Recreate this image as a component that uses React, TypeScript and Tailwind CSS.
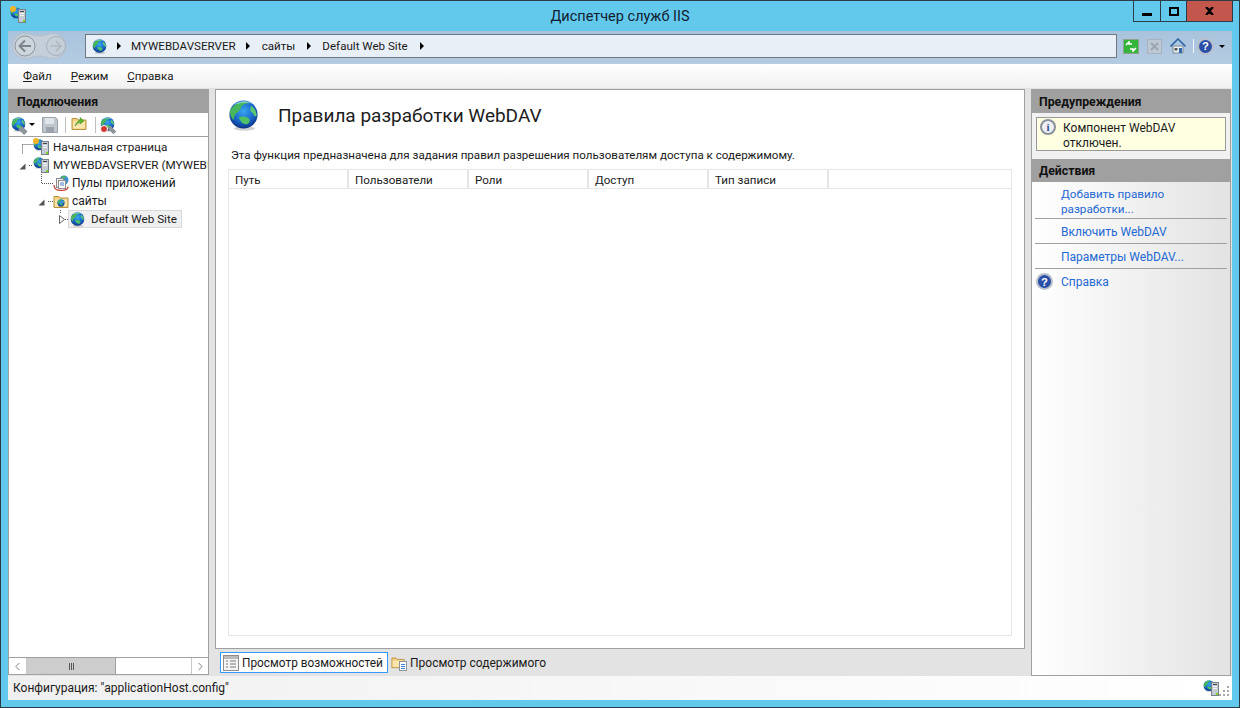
import { useId } from 'react'
import { ChevronLeft, ChevronRight } from 'lucide-react'
import type { ReactNode } from 'react'

const font = "font-['Roboto',sans-serif]"

function Globe({ size = 16 }: { size?: number }) {
  const id = useId()
  return (
    <svg width={size} height={size} viewBox="0 0 32 32" className="shrink-0">
      <defs>
        <radialGradient id={id} cx="50%" cy="38%" r="65%">
          <stop offset="0%" stopColor="#39a6f0" />
          <stop offset="60%" stopColor="#1766c8" />
          <stop offset="100%" stopColor="#0b2a78" />
        </radialGradient>
      </defs>
      <ellipse cx="17" cy="29.5" rx="11" ry="2.2" fill="#000" opacity="0.18" />
      <circle cx="16" cy="15" r="14.5" fill={`url(#${id})`} />
      <path d="M7 5c4-3.5 10-4.5 15-2.5-2 1.500-5 1-7 3-2 1.500-1 3-3 5-1 2-3 2-4 4-1 2-2 3-2 6-2-1-4-5-4-9 0-2 3-4 5-6.500z" fill="#48b65c" />
      <path d="M11 18c3-1.500 8-1 11 1.500 1 2 0 3.500-1.500 5-2 1-4 .5-6-1-1.500-2-2.500-3.500-3.500-5.500z" fill="#4fc063" />
      <path d="M24 6c3 2 5.500 5.500 5.500 10-1 1.500-2.500 1-3-1-.5-2-3.500-2.500-3.500-5 0-1.500.5-3 1-4z" fill="#5cc874" />
      <path d="M6 5c3-3 7-4 10-4 5 0 8 2 9 3-4-1.500-12-1.500-19 1z" fill="#a5e0f5" opacity="0.55" />
    </svg>
  )
}

function ServerIcon({ badge = false }: { badge?: boolean }) {
  return (
    <span className="relative inline-block w-[16px] h-[16px] shrink-0">
      <span className="absolute left-0 top-0">
        <Globe size={12} />
      </span>
      {badge && <span className="absolute left-0 top-[-1px] w-[6px] h-[6px] rounded-full bg-[#f0b429]" />}
      <svg width="8" height="14" viewBox="0 0 8 14" className="absolute right-0 bottom-0">
        <rect x="0.5" y="0.5" width="7" height="13" fill="#c4cbd2" stroke="#77818b" />
        <rect x="2" y="2" width="4" height="1" fill="#444" />
        <rect x="2" y="4" width="4" height="1" fill="#f4f4f4" />
        <rect x="2" y="6" width="4" height="1" fill="#f4f4f4" />
        <rect x="5" y="11" width="2" height="2" fill="#7ed321" />
      </svg>
    </span>
  )
}

function FolderIcon({ size = 16, globe = false, arrow = false }: { size?: number; globe?: boolean; arrow?: boolean }) {
  return (
    <span className="relative inline-block shrink-0" style={{ width: size, height: size }}>
      <svg width={size} height={size} viewBox="0 0 16 16" className="block">
        <path d="M1 3.500h5l1 1.500h8v9.500H1z" fill="#f3d284" stroke="#b8913f" />
        <path d="M2 6.500h12v7H2z" fill="#fae6ad" />
        {arrow && <path d="M4 11c1-3 3-5 5-6V2.500l4 3.500-4 3V7C7 8 5.500 9.500 4 11z" fill="#5cb531" stroke="#3f8a1f" strokeWidth="0.5" />}
      </svg>
      {globe && (
        <span className="absolute left-[4px] top-[6px]">
          <Globe size={8} />
        </span>
      )}
    </span>
  )
}

function PoolIcon() {
  return (
    <svg width="16" height="16" viewBox="0 0 16 16" className="shrink-0">
      <circle cx="11" cy="5" r="4.500" fill="#3f8ed6" />
      <path d="M8 2c1-1.500 4-1.500 5 0-1 2-3 2-5 0z" fill="#4caf5f" />
      <rect x="3.500" y="3.500" width="7" height="9" fill="#f1f1f1" stroke="#8a8a8a" />
      <rect x="5.500" y="5.500" width="7" height="8" fill="#fff" stroke="#8a8a8a" />
      <path d="M7 8h4M7 10h4" stroke="#4a76c6" />
      <path d="M1 10c0 4 3 5.500 7 5.500s7-1.500 7-4" fill="none" stroke="#c9473d" strokeWidth="1.300" />
    </svg>
  )
}

function HelpIcon({ size = 16 }: { size?: number }) {
  return (
    <span
      className="inline-flex items-center justify-center rounded-full shrink-0 bg-[#2a4ea8] border-2 border-[#b9c0ca] text-white font-bold font-['Liberation_Sans',sans-serif]"
      style={{ width: size, height: size, fontSize: size * 0.66 }}
    >
      ?
    </span>
  )
}

function TreeLines({ width, kind }: { width: number; kind: string }) {
  return (
    <svg width={width} height="18" viewBox={`0 0 ${width} 18`} className="shrink-0">
      <g stroke="#555" strokeDasharray="1 1" fill="none">
        {kind === 'first' && <path d="M13.500 6.500V16M13.500 6.500H24" />}
        {kind === 'open' && <path d="M20 9.500H24" />}
        {kind === 'pool' && <path d="M32.500 0V9.500H44" />}
        {kind === 'sites' && <path d="M39 9.500H44" />}
        {kind === 'default' && <path d="M51.500 0V4M56 9.500H59" />}
      </g>
      {(kind === 'open' || kind === 'sites') && (
        <path d={kind === 'open' ? 'M10.500 13.500h6V7.500z' : 'M29.500 13.500h6V7.500z'} fill="#555" />
      )}
      {kind === 'default' && <path d="M50.500 5.500l5 4-5 4z" fill="#fff" stroke="#666" />}
    </svg>
  )
}

function Header({ children }: { children: ReactNode }) {
  return (
    <div className="h-[24px] bg-[#a0a0a0] flex items-center px-[7px] pt-[2px] text-[12.3px] font-bold text-[#111] shrink-0">
      {children}
    </div>
  )
}

function Sep() {
  return <div className="h-px mx-[3px] bg-[#a0a0a0]" />
}

function Crumb({ gap = 'ml-[12px]' }: { gap?: string }) {
  return <span className={`${gap} w-0 h-0 border-y-[4px] border-y-transparent border-l-[4px] border-l-black`} />
}

const columns = ['Путь', 'Пользователи', 'Роли', 'Доступ', 'Тип записи']

export default function App() {
  return (
    <div className={`${font} w-[1240px] h-[708px] overflow-hidden bg-[#62c9ec] border border-[#2b3c46] flex flex-col text-[12px] leading-[16px] text-[#1a1a1a]`}>
      {/* Title bar */}
      <div className="h-[30px] shrink-0 flex items-start">
        <div className="pl-[9px] pt-[6px] w-[200px]">
          <ServerIcon badge />
        </div>
        <div className="flex-1 text-center pt-[6px] text-[14.5px] leading-[20px] text-[#102030]">Диспетчер служб IIS</div>
        <div className="w-[200px] flex justify-end pr-[6px]">
          <div className="flex h-[21px] border border-t-0 border-[#2b3c46]">
            <div className="w-[27px] flex items-end justify-center pb-[5px] border-r border-[#2b3c46]">
              <div className="w-[10px] h-[3px] bg-black" />
            </div>
            <div className="w-[26px] flex items-center justify-center border-r border-[#2b3c46]">
              <div className="w-[10px] h-[9px] border-2 border-black" />
            </div>
            <div className="w-[45px] bg-[#c3564d] flex items-center justify-center">
              <svg width="9" height="8" viewBox="0 0 9 8">
                <path d="M1 0l3.500 3L8 0M1 8l3.500-3L8 8M1 0l7 8M8 0L1 8" stroke="#000" strokeWidth="2" fill="none" />
              </svg>
            </div>
          </div>
        </div>
      </div>

      <div className="flex-1 mx-[7px] flex flex-col min-h-0">
        {/* Address row */}
        <div className="h-[33px] shrink-0 bg-gradient-to-b from-[#a9c3dd] to-[#b4cbe2] flex items-start pt-[2px] pl-[4px] pr-[7px]">
          <svg width="54" height="26" viewBox="0 0 54 26" className="shrink-0">
            <path d="M13 0.500c5 0 8 2.500 14 2.500s9-2.500 14-2.500c7 0 12.500 5.500 12.500 12.500S48 25.500 41 25.500c-5 0-8-2.500-14-2.500s-9 2.500-14 2.500C6 25.500 0.500 20 0.500 13S6 0.500 13 0.500z" fill="#c5cfd9" stroke="#b6bfc9" />
            <circle cx="13" cy="13" r="10" fill="#cdd5dd" stroke="#8d969f" />
            <circle cx="44" cy="13" r="9.500" fill="none" stroke="#a9b2bb" />
            <path d="M13 7.500l-5.500 5.500 5.500 5.500M8 13h11" stroke="#7f848a" strokeWidth="2" fill="none" />
            <path d="M44 8l5 5-5 5M48.500 13h-10" stroke="#aeb6be" strokeWidth="1.600" fill="none" />
          </svg>
          <div className="ml-[19px] flex-1 h-[24px] mt-[1px] border border-[#6f7780] bg-[#e9eff6] flex items-center pl-[6px] text-[11.6px]">
            <Globe size={15} />
            <Crumb gap="ml-[10px]" />
            <span className="ml-[10px]">MYWEBDAVSERVER</span>
            <Crumb gap="ml-[10px]" />
            <span className="ml-[12px]">сайты</span>
            <Crumb />
            <span className="ml-[11px]">Default Web Site</span>
            <Crumb />
          </div>
          <div className="flex items-center ml-[6px] h-[26px]">
            <span className="w-[16px] h-[15px] bg-[#35b53a] border border-[#8fa08f] flex items-center justify-center">
              <svg width="12" height="11" viewBox="0 0 12 11">
                <path d="M1 4l3-3v2h3M11 7L8 10V8H5" stroke="#fff" strokeWidth="1.600" fill="none" />
              </svg>
            </span>
            <span className="ml-[8px] w-[15px] h-[15px] bg-[#bcc8d4] border border-[#a8b2bc] flex items-center justify-center">
              <svg width="9" height="9" viewBox="0 0 9 9">
                <path d="M1 1l7 7M8 1L1 8" stroke="#9aa5af" strokeWidth="2" />
              </svg>
            </span>
            <svg width="16" height="16" viewBox="0 0 16 16" className="ml-[8px]">
              <path d="M3 8v7h10V8z" fill="#eef1f4" stroke="#7d8a96" />
              <path d="M0.500 8.500L8 1l7.500 7.500" fill="none" stroke="#2f66a8" strokeWidth="1.600" />
              <rect x="9" y="10" width="3" height="5" fill="#2f66a8" />
              <rect x="4.500" y="10" width="3" height="2.500" fill="#555" />
            </svg>
            <span className="ml-[7px] w-px h-[14px] bg-[#f2f6fa]" />
            <span className="ml-[3px]">
              <HelpIcon size={17} />
            </span>
            <span className="ml-[5px] w-0 h-0 border-x-[3px] border-x-transparent border-t-[3px] border-t-black" />
          </div>
        </div>

        {/* Menu */}
        <div className="h-[24px] shrink-0 bg-gradient-to-b from-white to-[#f1f1f1] flex items-center pl-[15px] gap-[19px] text-[11.6px]">
          <span><span className="underline">Ф</span>айл</span>
          <span><span className="underline">Р</span>ежим</span>
          <span><span className="underline">С</span>правка</span>
        </div>

        {/* Panels */}
        <div className="flex-1 min-h-0 bg-[#e3e3e3] flex pt-px">
          {/* Connections */}
          <div className="w-[201px] mb-[1px] border border-t-0 border-[#a0a0a0] bg-white flex flex-col shrink-0">
            <Header>
              <span className="pl-px">Подключения</span>
            </Header>
            <div className="h-[24px] shrink-0 border-b border-[#a0a0a0] flex items-center pl-[2px]">
              <span className="relative w-[16px] h-[16px]">
                <Globe size={15} />
                <span className="absolute right-0 bottom-0 w-[8px] h-[5px] bg-[#8d959c] rotate-45" />
              </span>
              <span className="ml-[2px] w-0 h-0 border-x-[3px] border-x-transparent border-t-[3px] border-t-black" />
              <svg width="16" height="16" viewBox="0 0 16 16" className="ml-[7px]">
                <path d="M0.500 0.500h13l2 2v13H0.500z" fill="#bfc6cc" stroke="#9aa3ab" />
                <rect x="3" y="1" width="9" height="6" fill="#dfe4e8" />
                <rect x="4" y="10" width="8" height="5" fill="#9aa3ab" />
              </svg>
              <span className="ml-[7px] w-px h-[16px] bg-[#c0c0c0]" />
              <span className="ml-[5px]"><FolderIcon size={16} arrow /></span>
              <span className="ml-[8px] w-px h-[16px] bg-[#c0c0c0]" />
              <span className="relative ml-[4px] w-[16px] h-[16px]">
                <Globe size={15} />
                <span className="absolute right-0 bottom-[1px] w-[8px] h-[4px] bg-[#8d959c] rotate-45" />
                <span className="absolute left-0 bottom-0 w-[8px] h-[8px] rounded-full bg-[#d0342c] border border-white" />
              </span>
            </div>
            <div className="flex-1 min-h-0 overflow-hidden pt-[1px] whitespace-nowrap">
              <div className="h-[18px] flex items-center">
                <TreeLines width={24} kind="first" />
                <ServerIcon badge />
                <span className="ml-[4px] text-[11.7px]">Начальная страница</span>
              </div>
              <div className="h-[18px] flex items-center">
                <TreeLines width={24} kind="open" />
                <ServerIcon />
                <span className="ml-[4px] text-[11.7px]">MYWEBDAVSERVER (MYWEBI</span>
              </div>
              <div className="h-[18.5px] flex items-center">
                <TreeLines width={44} kind="pool" />
                <PoolIcon />
                <span className="ml-[3px]">Пулы приложений</span>
              </div>
              <div className="h-[17.5px] flex items-center">
                <TreeLines width={44} kind="sites" />
                <FolderIcon globe />
                <span className="ml-[3px]">сайты</span>
              </div>
              <div className="h-[18px] flex items-center">
                <TreeLines width={59} kind="default" />
                <div className="h-[18px] w-[114px] bg-[#f0f0f0] border border-[#d9d9d9] flex items-center pl-[1px]">
                  <Globe size={15} />
                  <span className="ml-[6px] text-[11.7px]">Default Web Site</span>
                </div>
              </div>
            </div>
            {/* Scrollbar */}
            <div className="h-[17px] shrink-0 flex bg-white border-t border-[#a0a0a0] text-[#606060]">
              <div className="w-[18px] flex items-center justify-center border-r border-[#c8c8c8]">
                <ChevronLeft size={13} strokeWidth={1.500} />
              </div>
              <div className="w-[89px] bg-[#cdcdcd] border-r border-[#a0a0a0] flex items-center justify-center gap-px">
                <span className="w-px h-[7px] bg-[#555]" />
                <span className="w-px h-[7px] bg-[#555]" />
                <span className="w-px h-[7px] bg-[#555]" />
              </div>
              <div className="flex-1" />
              <div className="w-[17px] flex items-center justify-center border-l border-[#c8c8c8]">
                <ChevronRight size={13} strokeWidth={1.500} />
              </div>
            </div>
          </div>

          {/* Center */}
          <div className="flex-1 min-w-0 ml-[6px] flex flex-col">
            <div className="flex-1 min-h-0 bg-white border border-[#a0a0a0] px-[12px] flex flex-col">
              <div className="h-[50px] shrink-0 flex items-center">
                <Globe size={31} />
                <span className="ml-[19px] pt-[1px] text-[19px] leading-[24px] text-[#1c1c1c]">Правила разработки WebDAV</span>
              </div>
              <p className="pl-[3px] mt-[7px] h-[16px] shrink-0 text-[11.6px]">Эта функция предназначена для задания правил разрешения пользователям доступа к содержимому.</p>
              <div className="mt-[6px] mb-[12px] flex-1 min-h-0 border border-[#e6e6e6]">
                <div className="h-[19px] flex border-b border-[#e6e6e6] text-[11.6px]">
                  {columns.map(c => (
                    <div key={c} className="w-[120px] pl-[6px] pt-[2px] border-r-2 border-[#e6e6e6] flex items-center">{c}</div>
                  ))}
                </div>
              </div>
            </div>
            <div className="h-[27px] shrink-0 flex items-center pl-[5px]">
              <div className="h-[21px] w-[168px] bg-white border border-[#3399ff] flex items-center pl-[2px] whitespace-nowrap">
                <svg width="16" height="16" viewBox="0 0 16 16" className="shrink-0">
                  <rect x="0.500" y="0.500" width="15" height="15" fill="#f4f4f4" stroke="#8d8d8d" />
                  <rect x="1" y="1" width="14" height="3" fill="#b9b9b9" />
                  <path d="M3 6h2M3 9h2M3 12h2M7 6h6M7 9h6M7 12h6" stroke="#777" />
                </svg>
                <span className="ml-[3px] text-[11.85px]">Просмотр возможностей</span>
              </div>
              <span className="relative ml-[3px] w-[16px] h-[16px] shrink-0">
                <FolderIcon size={14} />
                <svg width="8" height="10" viewBox="0 0 8 10" className="absolute right-0 bottom-0">
                  <rect x="0.500" y="0.500" width="7" height="9" fill="#fff" stroke="#8a93a0" />
                  <path d="M2 3.500h4M2 5.500h4M2 7.500h4" stroke="#3d7fd0" />
                </svg>
              </span>
              <span className="ml-[3px] whitespace-nowrap">Просмотр содержимого</span>
            </div>
          </div>

          {/* Actions */}
          <div className="w-[200px] ml-[6px] mr-[1px] border border-t-0 border-[#a0a0a0] bg-gradient-to-r from-white to-[#e3e3e3] flex flex-col shrink-0">
            <Header>Предупреждения</Header>
            <div className="h-[46px] shrink-0 bg-[#f1f1f1] pt-[4px] pl-[4px]">
              <div className="w-[190px] h-[34px] bg-[#ffffe1] border border-[#999] flex items-start pl-[3px] pt-[1px]">
                <span className="w-[16px] h-[16px] rounded-full border-2 border-[#8a919a] bg-[#eef0f4] flex items-center justify-center text-[11px] font-bold text-[#2f4f8f] font-['Liberation_Serif',serif] shrink-0">i</span>
                <span className="ml-[7px] mt-[2px] leading-[15px]">Компонент WebDAV отключен.</span>
              </div>
            </div>
            <div className="h-[23px] shrink-0 bg-[#a0a0a0] flex items-center px-[7px] text-[12.3px] font-bold text-[#111]">Действия</div>
            <div className="flex-1 text-[#2468d2]">
              <div className="pl-[29px] pt-[5px] h-[36px] leading-[15px] text-[11.7px]">Добавить правило разработки...</div>
              <Sep />
              <div className="pl-[29px] pt-[2px] h-[24px] flex items-center">Включить WebDAV</div>
              <Sep />
              <div className="pl-[29px] pt-[2px] h-[24px] flex items-center">Параметры WebDAV...</div>
              <Sep />
              <div className="pl-[4px] h-[25px] flex items-center">
                <HelpIcon size={17} />
                <span className="ml-[8px]">Справка</span>
              </div>
            </div>
          </div>
        </div>

        {/* Status bar */}
        <div className="h-[24px] shrink-0 bg-gradient-to-r from-[#f0f0f0] to-white flex items-center pl-[5px] pr-[1px]">
          <span className="flex-1">Конфигурация: "applicationHost.config"</span>
          <ServerIcon />
          <svg width="12" height="12" viewBox="0 0 12 12" className="self-end mb-[3px]">
            <path d="M8 1h2v2H8zM4 5h2v2H4zM8 5h2v2H8zM0 9h2v2H0zM4 9h2v2H4zM8 9h2v2H8z" fill="#a8a8a8" />
          </svg>
        </div>
      </div>
      <div className="h-[7px] shrink-0" />
    </div>
  )
}
